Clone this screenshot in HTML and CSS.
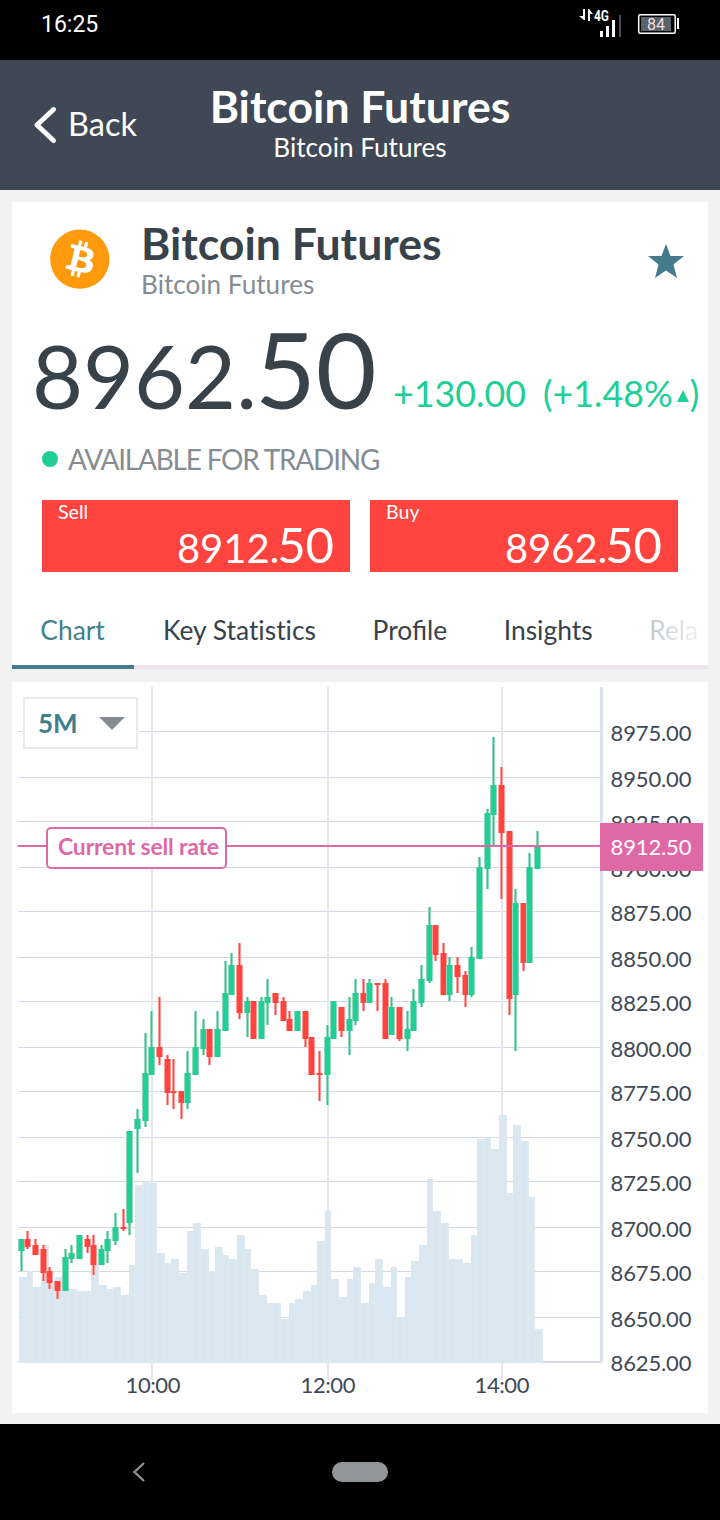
FILE: index.html
```html
<!DOCTYPE html>
<html lang="en">
<head>
<meta charset="utf-8">
<title>Bitcoin Futures</title>
<link rel="stylesheet" href="styles.css">
</head>
<body>
<div class="statusbar">
  <span class="clock">16:25</span>
  <svg class="indicators" width="102" height="32" viewBox="578 6 102 32">
    <g fill="#fff">
      <path d="M583 9h2v11h-1l-5-4h4zM588 9h1l4 5h-3v7h-2z"/>
      <text class="net" x="594" y="21" textLength="15" lengthAdjust="spacingAndGlyphs">4G</text>
      <path d="M600 31h3v6h-3zM606 26h3v11h-3zM612 20h3v17h-3z"/>
      <path d="M619 15h2v22h-2z" fill="#46505a"/>
      <path d="M677 18h2v11h-2z"/>
    </g>
    <rect x="638.700" y="14.700" width="36.500" height="18.500" rx="1.500" fill="#000" stroke="#fff" stroke-width="1.500"/>
    <rect x="641" y="17" width="30" height="14" fill="#59636d"/>
    <text class="charge" x="656" y="29.500" text-anchor="middle">84</text>
  </svg>
</div>
<header class="header">
  <a class="back">
    <svg width="24" height="38" viewBox="0 0 24 38"><path d="M19.500 3.500L3 19 19.500 34.500" fill="none" stroke="#fff" stroke-width="4.800" stroke-linecap="round" stroke-linejoin="round"/></svg>
    <span>Back</span>
  </a>
  <div class="heading">
    <h1 class="name">Bitcoin Futures</h1>
    <div class="sub">Bitcoin Futures</div>
  </div>
</header>
<main class="content">
  <section class="card quote">
    <div class="instrument">
      <svg class="coin" width="60" height="60" viewBox="0 0 32 32">
        <circle cx="15.900" cy="16.100" r="15.800" fill="#ff9a0d"/>
        <path fill="#fff" d="M23.189 14.020c.314-2.096-1.283-3.223-3.465-3.975l.708-2.840-1.728-.430-.690 2.765c-.454-.114-.920-.220-1.385-.326l.695-2.783L15.596 6l-.708 2.839c-.376-.086-.746-.170-1.104-.260l.002-.009-2.384-.595-.460 1.846s1.283.294 1.256.312c.700.175.826.638.805 1.006l-.806 3.235c.048.012.110.030.180.057l-.183-.045-1.130 4.532c-.086.212-.303.531-.793.410.018.025-1.256-.313-1.256-.313l-.858 1.978 2.250.561c.418.105.828.215 1.231.318l-.715 2.872 1.727.430.708-2.840c.472.127.930.245 1.378.357l-.706 2.828 1.728.430.715-2.866c2.948.558 5.164.333 6.097-2.333.752-2.146-.037-3.385-1.588-4.192 1.130-.260 1.980-1.003 2.207-2.538zm-3.950 5.538c-.533 2.147-4.148.986-5.320.695l.950-3.805c1.172.293 4.929.872 4.370 3.110zm.535-5.569c-.487 1.953-3.495.960-4.470.717l.860-3.450c.975.243 4.118.696 3.610 2.733z"/>
      </svg>
      <div class="titles">
        <h2 class="name">Bitcoin Futures</h2>
        <div class="sub">Bitcoin Futures</div>
      </div>
      <svg class="star" width="36" height="34" viewBox="0 0 36 34"><path d="M18 0l4.500 12H36L25.500 20.500 29 34 18 26.500 7 34l3.500-13.500L0 12h13.500z" fill="#457b8b"/></svg>
    </div>
    <div class="pricing">
      <div class="price">8962.<span class="cents">50</span></div>
      <div class="change"><span>+130.00</span><span class="percent">(+1.48%<svg width="12" height="12" viewBox="0 0 12 12"><path d="M6 0l6 12H0z" fill="#20cf95"/></svg>)</span></div>
    </div>
    <div class="availability"><i class="dot"></i><span>AVAILABLE FOR TRADING</span></div>
    <div class="orders">
      <button class="order"><span class="side">Sell</span><span class="rate">8912.<b>50</b></span></button>
      <button class="order"><span class="side">Buy</span><span class="rate">8962.<b>50</b></span></button>
    </div>
    <nav class="tabs">
      <a class="tab active">Chart</a><a class="tab plain">Key Statistics</a><a class="tab">Profile</a><a class="tab">Insights</a><a class="tab faded">Rela</a>
    </nav>
  </section>
  <section class="card chart">
    <svg id="plot" width="696" height="731" viewBox="12 682 696 731"></svg>
    <button class="interval"><span>5M</span><svg width="26" height="13" viewBox="0 0 26 13"><path d="M0 0h26L13 13z" fill="#858b90"/></svg></button>
  </section>
</main>
<footer class="navbar">
  <svg class="navback" width="14" height="20" viewBox="0 0 14 20"><path d="M12 1L2.500 10 12 19" fill="none" stroke="#8b8f93" stroke-width="2.400"/></svg>
  <span class="pill"></span>
</footer>
<script src="chart.js"></script>
</body>
</html>
```
FILE: styles.css
```css
* { box-sizing: border-box; }
body { margin: 0; width: 720px; height: 1520px; overflow: hidden; background: #f2f2f3; font-family: Lato, "Liberation Sans", sans-serif; color: #38424a; display: flex; flex-direction: column; }
h1, h2 { margin: 0; }
button { border: 0; padding: 0; font-family: inherit; }
svg { display: block; flex: none; }
.statusbar { height: 60px; background: #000; color: #fff; display: flex; justify-content: space-between; padding: 6px 40px 0 41px; }
.clock { font: 23px/38px Roboto, sans-serif; }
.net { font: bold 14px Roboto, sans-serif; }
.charge { font: 16px Roboto, sans-serif; fill: #f3dedd; }
.header { height: 130px; background: #414855; color: #fff; display: grid; grid-template-columns: 1fr auto 1fr; padding: 21px 34px 0; }
.back { display: flex; gap: 10px; align-items: center; height: 88px; font-size: 32.500px; line-height: 38px; }
.back span { padding-bottom: 2px; }
.heading { text-align: center; }
.name { font-size: 44.600px; line-height: 50px; font-weight: 700; white-space: nowrap; }
.sub { font-size: 26.150px; line-height: 32px; white-space: nowrap; }
.content { height: 1234px; padding: 12px 12px 0; display: flex; flex-direction: column; gap: 13px; }
.card { background: #fff; }
.quote { height: 467px; }
.instrument { display: flex; height: 111px; padding: 16px 24px 0 38px; }
.coin { margin-top: 11px; }
.titles { flex: 1; padding-left: 31px; }
.titles .sub { color: #858c92; }
.star { margin-top: 26px; }
.pricing { display: flex; align-items: baseline; height: 122px; padding-left: 20px; white-space: nowrap; }
.price { font-size: 88px; line-height: 110px; width: 361px; }
.cents { font-size: 105px; margin-left: -2px; }
.change { font-size: 35.800px; color: #20cf95; display: flex; gap: 17px; transform: translateY(-2px); }
.percent svg { display: inline-block; margin: 0 1px 0 4px; vertical-align: 5px; }
.availability { display: flex; align-items: center; gap: 10px; height: 48px; padding-left: 30px; font-size: 28px; letter-spacing: -1.220px; color: #858c92; }
.dot { width: 16px; height: 16px; border-radius: 50%; background: #20cf95; }
.orders { display: grid; grid-template-columns: 1fr 1fr; gap: 20px; padding: 17px 30px 0; }
.order { height: 72px; background: #ff433e; color: #fff; padding: 0 16px; display: flex; flex-direction: column; justify-content: flex-start; text-align: left; }
.side { font-size: 19.600px; line-height: 24px; }
.rate { font-size: 40px; line-height: 44px; margin-top: -2px; align-self: flex-end; }
.rate b { font-size: 49px; font-weight: 400; margin-left: -2px; }
.tabs { display: flex; margin-top: 22px; height: 75px; overflow: hidden; box-shadow: inset 0 -4px #efe4ed; }
.tab { flex: none; height: 75px; padding: 0 28.300px; font-size: 26.400px; line-height: 72px; color: #38424a; }
.tab.active { color: #3e8188; width: 122px; border-bottom: 4px solid #457b8b; }
.tab.plain { font-variant-ligatures: none; padding-left: 29px; }
.tab.faded { height: 70px; padding-right: 0; width: 80px; color: transparent; background: linear-gradient(90deg, #bfc8cb 28px, #f1eef2 78px); -webkit-background-clip: text; background-clip: text; }
.chart { height: 731px; position: relative; }
.interval { position: absolute; left: 11px; top: 15px; width: 115px; height: 52px; border: 2px solid #e8e8ef; background: #fff; color: #40808b; display: flex; align-items: center; justify-content: space-between; padding: 0 11px 0 13px; font-size: 26px; font-weight: 700; }
.axis { font-size: 22px; fill: #414855; }
.axis.current { fill: #fff; }
.sell-label { font-size: 23px; font-weight: 700; fill: #df68a7; }
.navbar { height: 96px; background: #000; display: flex; align-items: center; padding-left: 132px; gap: 186px; }
.pill { width: 56px; height: 20px; border-radius: 10px; background: #91969b; }
```
FILE: chart.js
```js
// Candle columns: x, up (1) or down (0), high, body top, body bottom, low
const candles = [
[21,1,1239,1239,1251,1271],[27,0,1231,1239,1247,1249],[35,0,1239,1245,1255,1255],[43,0,1245,1249,1273,1281],
[49,0,1267,1271,1283,1289],[57,0,1281,1281,1291,1299],[65,1,1249,1257,1291,1291],[71,1,1245,1253,1259,1263],
[79,1,1235,1235,1259,1259],[87,0,1235,1239,1247,1253],[93,0,1235,1245,1265,1275],[101,1,1245,1249,1265,1265],
[107,1,1231,1239,1251,1263],[115,1,1213,1227,1241,1245],[123,0,1209,1227,1229,1231],[129,1,1131,1131,1223,1235],
[137,1,1109,1119,1129,1173],[145,1,1033,1073,1121,1127],[151,1,1011,1047,1075,1075],[159,0,997,1047,1057,1065],
[167,0,1055,1059,1093,1105],[173,0,1059,1091,1093,1109],[181,0,1091,1091,1103,1119],[187,1,1051,1073,1103,1109],
[195,1,1011,1047,1075,1075],[203,1,1019,1029,1049,1055],[209,0,1029,1029,1057,1065],[217,1,1011,1029,1057,1057],
[225,1,961,993,1031,1031],[231,1,953,965,995,995],[239,0,943,965,1013,1019],[247,1,997,1001,1013,1037],
[253,0,1001,1001,1039,1039],[261,1,997,1001,1039,1039],[267,1,979,997,1003,1025],[275,0,993,993,1003,1015],
[283,0,997,1001,1021,1021],[289,0,1011,1019,1031,1031],[297,1,1011,1011,1031,1031],[305,0,1011,1011,1039,1047],
[311,0,1037,1037,1075,1075],[319,0,1051,1073,1075,1101],[327,1,1025,1037,1075,1105],[333,1,1001,1001,1039,1039],
[341,0,1007,1007,1031,1037],[349,1,997,1019,1031,1055],[355,1,979,993,1021,1025],[363,0,979,993,1003,1011],
[369,1,979,983,1003,1003],[377,0,983,983,985,1011],[385,0,979,983,1039,1039],[391,1,997,1007,1035,1035],
[399,0,1007,1007,1039,1041],[407,1,1011,1029,1039,1051],[413,1,989,1001,1031,1031],[421,1,965,979,1003,1007],
[429,1,907,925,981,983],[435,0,925,925,955,961],[443,0,943,953,995,995],[449,1,957,965,995,1001],
[457,0,957,965,977,993],[465,0,971,975,995,1007],[471,1,947,957,995,997],[479,1,857,867,959,959],
[487,1,809,813,869,889],[493,1,737,785,815,845],[501,0,767,785,833,899],[509,0,831,831,999,1015],
[515,1,889,903,995,1051],[523,0,903,903,963,971],[529,1,853,867,963,963],[537,1,831,847,869,869]];

// Volume columns: left edge, top
const volume = [
[19,1277],[27,1271],[33,1287],[41,1245],[49,1283],[55,1277],[63,1289],[69,1289],[77,1291],[85,1291],[91,1265],[99,1285],
[107,1289],[113,1287],[121,1295],[129,1265],[135,1185],[143,1181],[149,1183],[157,1253],[165,1263],[171,1259],[179,1273],
[187,1231],[193,1223],[201,1249],[209,1271],[215,1247],[223,1255],[229,1259],[237,1235],[245,1249],[251,1269],[259,1295],
[267,1303],[273,1303],[281,1319],[289,1303],[295,1299],[303,1291],[311,1285],[317,1241],[325,1211],[331,1279],[339,1297],
[347,1279],[353,1267],[361,1303],[369,1283],[375,1259],[383,1287],[391,1267],[397,1317],[405,1277],[411,1261],[419,1245],
[427,1179],[433,1211],[441,1223],[449,1259],[455,1259],[463,1263],[471,1235],[477,1139],[485,1137],[491,1149],[499,1115],
[507,1193],[513,1125],[521,1141],[529,1197],[535,1329],[543,1363]];

const rows = [731,777,821,867,911,957,1001,1047,1091,1137,1181,1227,1271,1317,1361];
const rect = (x, y, w, h, fill) => `<rect x="${x}" y="${y}" width="${w}" height="${h}" fill="${fill}"/>`;
let out = '';

rows.forEach((y, i) => {
  out += rect(18, y, 583, i === 14 ? 2 : 1, '#d6d8e6');
  out += `<text class="axis" x="610.500" y="${y + 10}" textLength="81">${8975 - 25 * i}.00</text>`;
});
[[151, 153, '10:00'], [327, 328, '12:00'], [501, 502, '14:00']].forEach(([x, center, label]) => {
  out += rect(x, 687, 2, 693, '#e2e6ef');
  out += `<text class="axis" x="${center}" y="1393" text-anchor="middle" textLength="55">${label}</text>`;
});
out += rect(600, 687, 3, 675, '#dce2ee');

for (let i = 0; i < volume.length - 1; i++) {
  const [x, top] = volume[i], w = volume[i + 1][0] - x;
  out += rect(x, top, w, 1363 - top, '#d9e7f1') + rect(x + w - 1, top, 1, 1363 - top, '#e0e9f1');
}
candles.forEach(([x, up, high, top, bottom, low]) => {
  const solid = up ? '#20cf95' : '#ff433e';
  const edge = up ? '#8fd9bd' : '#ff9b98';
  const wick = up ? '#35c495' : '#fb4a45';
  out += rect(x - 1, high, 3, low - high, edge) + rect(x, high, 1, low - high, wick);
  out += rect(x - 3, top, 7, bottom - top, edge) + rect(x - 2, top, 5, bottom - top, solid);
});

out += rect(18, 845, 583, 2, '#df68a7');
out += '<rect x="47" y="828" width="179" height="40" rx="4" fill="#fff" stroke="#df68a7" stroke-width="2"/>';
out += '<text class="sell-label" x="138.500" y="855" text-anchor="middle" textLength="161">Current sell rate</text>';
out += rect(600, 823, 103, 48, '#df68a7');
out += '<text class="axis current" x="610.500" y="855" textLength="81">8912.50</text>';
document.getElementById('plot').innerHTML = out;
```
